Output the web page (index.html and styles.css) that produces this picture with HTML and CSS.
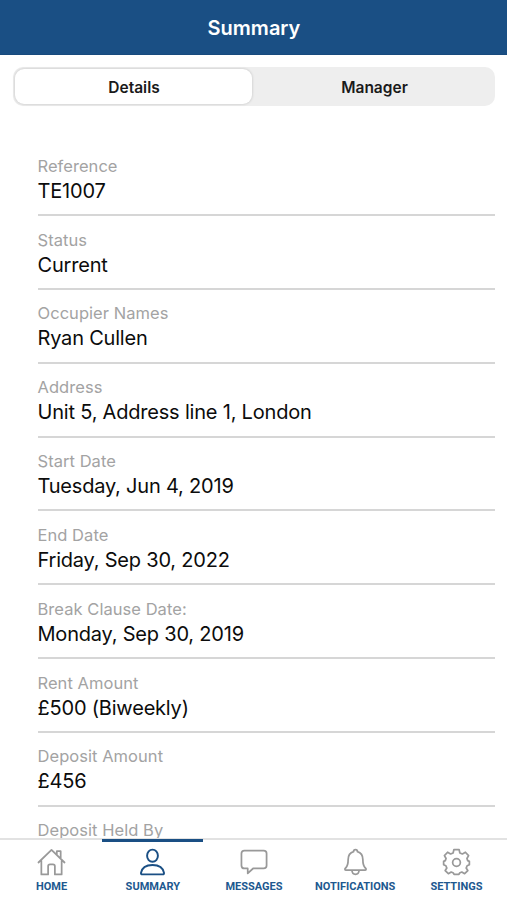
FILE: index.html
```html
<!DOCTYPE html>
<html lang="en">
<head>
    <meta charset="UTF-8">
    <meta name="viewport" content="width=device-width, initial-scale=1.0">
    <title>Summary</title>
    <link rel="stylesheet" href="styles.css">
</head>
<body>

    <header class="header">
        <h1>Summary</h1>
    </header>

    <div class="segments">
        <button class="segment active">Details</button>
        <button class="segment">Manager</button>
    </div>

    <main class="details">
        <div class="field">
            <span class="label">Reference</span>
            <span class="value">TE1007</span>
        </div>
        <div class="field">
            <span class="label">Status</span>
            <span class="value">Current</span>
        </div>
        <div class="field">
            <span class="label">Occupier Names</span>
            <span class="value">Ryan Cullen</span>
        </div>
        <div class="field">
            <span class="label">Address</span>
            <span class="value">Unit 5, Address line 1, London</span>
        </div>
        <div class="field">
            <span class="label">Start Date</span>
            <span class="value">Tuesday, Jun 4, 2019</span>
        </div>
        <div class="field">
            <span class="label">End Date</span>
            <span class="value">Friday, Sep 30, 2022</span>
        </div>
        <div class="field">
            <span class="label">Break Clause Date:</span>
            <span class="value">Monday, Sep 30, 2019</span>
        </div>
        <div class="field">
            <span class="label">Rent Amount</span>
            <span class="value">£500 (Biweekly)</span>
        </div>
        <div class="field">
            <span class="label">Deposit Amount</span>
            <span class="value">£456</span>
        </div>
        <div class="field">
            <span class="label">Deposit Held By</span>
        </div>
    </main>

    <nav class="tab-bar">
        <a class="tab">
            <svg viewBox="0 0 30 30">
                <path d="M1.500 15 15 2l13.500 13M4.500 13v14.300h7v-8.300q0-2 2-2h3q2 0 2 2v8.300h7V13M20.500 7V3.300h4V11"/>
            </svg>
            <span>HOME</span>
        </a>
        <a class="tab active">
            <svg viewBox="0 0 30 30">
                <ellipse cx="15" cy="8" rx="5.600" ry="6.300"/>
                <path d="M4.500 27.300q-1.600 0-1.400-1.600C4 20.500 8.500 17.500 15 17.500s11 3 11.900 8.200q.2 1.600-1.400 1.600z"/>
            </svg>
            <span>SUMMARY</span>
        </a>
        <a class="tab">
            <svg viewBox="0 0 30 30">
                <path d="M4.500 2.700h20q3 0 3 3v12.500q0 3-3 3H13.500L8 26.300v-5.100H4.500q-3 0-3-3V5.700q0-3 3-3z"/>
            </svg>
            <span>MESSAGES</span>
        </a>
        <a class="tab">
            <svg viewBox="0 0 30 30">
                <path d="M15 1.800c-1.400 0-2 .8-2 2-4 1.200-5.600 4.200-5.600 8.200 0 5-.6 7-2.600 8.700-1.200 1-.8 2.200.4 2.200h19.600c1.200 0 1.600-1.200.4-2.200-2-1.700-2.600-3.700-2.600-8.700 0-4-1.600-7-5.600-8.200 0-1.200-.6-2-2-2zM11.300 23c.2 2.900 1.700 4.200 3.700 4.200s3.500-1.300 3.700-4.200"/>
            </svg>
            <span>NOTIFICATIONS</span>
        </a>
        <a class="tab">
            <svg viewBox="0 0 30 30">
                <path d="M12.300 1.700h5.400l.8 3.400 2.600 1.100 3.100-1.800 3.300 3.500-1.700 3 .8 2.200 1.700.7v3.600l-2.300 1-1 2.400 1.700 2.500-3.300 3.300-2.900-1.700-2.300 1-.7 1.400h-5l-.7-1.400-2.300-1-2.900 1.700-3.300-3.300L5 20.800l-1-2.400-2.300-1v-3.600l1.700-.7.8-2.200-1.700-3 3.300-3.500 3.100 1.800 2.600-1.100z"/>
                <circle cx="15" cy="15" r="4"/>
            </svg>
            <span>SETTINGS</span>
        </a>
    </nav>

</body>
</html>
```

FILE: styles.css
```css
* {
    box-sizing: border-box;
}

body {
    font-family: 'Inter', sans-serif;
    background-color: #fff;
    color: #0c0c0c;
    margin: 0;
    height: 100vh;
    display: flex;
    flex-direction: column;
    overflow: hidden;
}

.header {
    flex: none;
    height: 55px;
    background-color: #1a4f84;
    border-bottom: 1px solid #184a7d;
    color: #fff;
    display: flex;
    align-items: center;
    justify-content: center;
}

.header h1 {
    margin: 2px 0 0;
    font-size: 20px;
    font-weight: 600;
    padding-left: 1px;
}

.segments {
    flex: none;
    display: flex;
    height: 39px;
    margin: 12px 12px 0 13px;
    padding: 2px;
    background-color: #eee;
    border-radius: 10px;
}

.segment {
    flex: 1;
    border: none;
    padding: 2px 0 0 4px;
    background: none;
    border-radius: 9px;
    color: #1a1a1a;
    font-family: inherit;
    font-size: 15.500px;
    font-weight: 600;
}

.segment.active {
    flex: none;
    width: 237px;
    padding-left: 1px;
    background-color: #fff;
    box-shadow: 0 0 3px rgba(0, 0, 0, 0.2);
}

.details {
    flex: 1;
    min-height: 0;
    overflow: hidden;
    padding: 36.200px 12px 0 37.500px;
}

.field {
    height: 73.850px;
    padding-top: 12.500px;
    border-bottom: 2px solid #d6d6d6;
}

.label,
.value {
    display: block;
    white-space: nowrap;
}

.label {
    color: #a3a3a3;
    font-size: 16.500px;
    letter-spacing: 0.050px;
    line-height: 22px;
}

.value {
    font-size: 20px;
    letter-spacing: -0.200px;
    line-height: 28px;
}

.tab-bar {
    flex: none;
    display: flex;
    height: 62px;
    padding-left: 1px;
    border-top: 2px solid #e2e2e2;
    background-color: #fff;
}

.tab {
    flex: 1;
    display: flex;
    flex-direction: column;
    align-items: center;
    padding-top: 8px;
    color: #20588f;
    font-family: 'Roboto', sans-serif;
    font-size: 11px;
    font-weight: 700;
    line-height: 14px;
}

.tab svg {
    width: 29px;
    height: 29px;
    margin-bottom: 3px;
    fill: none;
    stroke: #999;
    stroke-width: 1.800;
    stroke-linejoin: round;
    stroke-linecap: round;
}

/* Selected tab line sits over the bar's top border */
.tab.active {
    margin-top: -1px;
    padding-top: 6px;
    border-top: 3px solid #1a4f84;
}

.tab.active svg {
    stroke: #1a4f84;
    stroke-width: 2;
}
```
